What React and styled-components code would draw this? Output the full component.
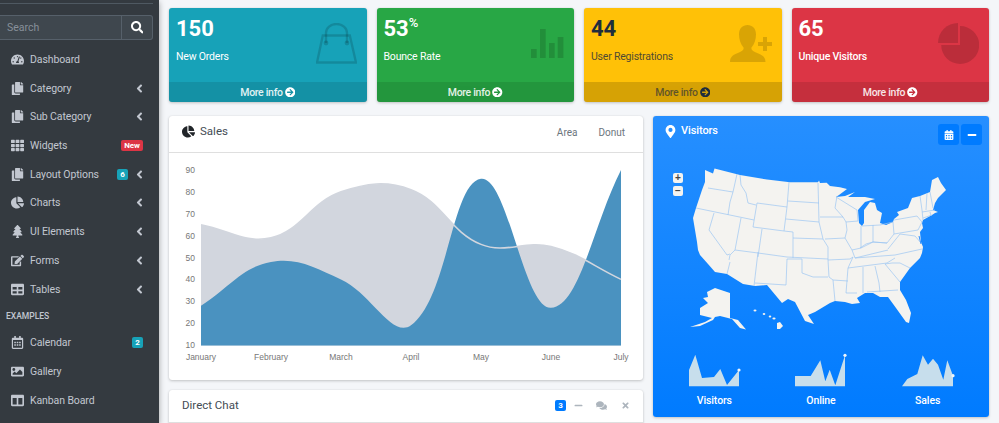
import React from "react";
import styled, { createGlobalStyle } from "styled-components";
import {
  FaTachometerAlt, FaCopy, FaTh, FaChartPie, FaTree, FaEdit, FaTable, FaRegCalendarAlt,
  FaImage, FaColumns, FaSearch, FaAngleLeft, FaArrowCircleRight, FaMapMarkerAlt,
  FaCalendarAlt, FaMinus, FaComments, FaTimes,
} from "react-icons/fa";

const FONT = `Roboto, "Noto Sans", sans-serif`;

const GlobalStyle = createGlobalStyle`
  html, body { margin: 0; height: 423px; overflow: hidden; background: #f4f6f9; }
  body { font-family: ${FONT}; color: #212529; }
  * { box-sizing: border-box; }
`;

const Layout = styled.div`
  display: flex;
  height: 423px;
  overflow: hidden;
`;

const Sidebar = styled.aside`
  width: 159px;
  flex: none;
  background: #343a40;
  box-shadow: 0 2px 6px rgba(0, 0, 0, 0.35);
  padding-top: 3px;
  overflow: hidden;
`;

const Divider = styled.div`
  width: 153px;
  height: 1px;
  background: #4f5962;
`;

const SearchBar = styled.div`
  display: flex;
  width: 153px;
  height: 25px;
  margin: 11px 0 5.2px;
`;

const SearchInput = styled.div`
  flex: 1;
  background: #3f474e;
  border: 1px solid #56606a;
  border-left: 0;
  padding-left: 7px;
  font-size: 10.5px;
  line-height: 23px;
  color: #87909a;
`;

const SearchButton = styled.div`
  width: 31px;
  background: #3f474e;
  border: 1px solid #56606a;
  border-left: 0;
  border-radius: 0 3px 3px 0;
  display: flex;
  align-items: center;
  justify-content: center;
  color: #fff;
  font-size: 12.5px;
`;

const NavItem = styled.div`
  height: 28.7px;
  display: flex;
  align-items: center;
  padding: 0 16px 0 10px;
  color: #c2c7d0;
  font-size: 10.5px;
  letter-spacing: -0.1px;
`;

const NavIcon = styled.span`
  width: 14px;
  margin-right: 6px;
  display: flex;
  justify-content: center;
  font-size: 13px;
`;

const NavLabel = styled.span`
  flex: 1;
  white-space: nowrap;
`;

const NavHeader = styled.div`
  height: 25.2px;
  padding: 6px 0 0 6px;
  color: #c2c7d0;
  font-size: 8.5px;
  line-height: 14px;
  font-weight: 500;
`;

const Badge = styled.span`
  background: ${(p) => p.$color};
  color: #fff;
  border-radius: 2px;
  font-size: 8px;
  font-weight: 700;
  line-height: 11px;
  height: 11px;
  min-width: 11px;
  padding: 0 ${(p) => (p.$wide ? 3 : 2)}px;
  text-align: center;
  letter-spacing: 0;
`;

const Chevron = styled(FaAngleLeft)`
  font-size: 13px;
  margin-left: ${(p) => (p.$near ? 5 : 0)}px;
  margin-right: -3px;
`;

const Main = styled.main`
  flex: 1;
  padding: 8px 10px 0;
  min-width: 0;
`;

const StatRow = styled.div`
  display: grid;
  grid-template-columns: repeat(4, 1fr);
  gap: 10px;
`;

const StatCard = styled.div`
  position: relative;
  height: 94px;
  border-radius: 3px;
  background: ${(p) => p.$bg};
  color: ${(p) => p.$fg};
  box-shadow: 0 0 1px rgba(0, 0, 0, 0.125), 0 1px 3px rgba(0, 0, 0, 0.2);
  display: flex;
  flex-direction: column;
  overflow: hidden;
`;

const StatBody = styled.div`
  flex: 1;
  padding: 6px 7px 0;
`;

const StatValue = styled.div`
  font-size: 22px;
  font-weight: 700;
  line-height: 29px;
  sup { font-size: 13px; font-weight: 500; line-height: 0; position: relative; top: -1px; vertical-align: super; }
`;

const StatLabel = styled.div`
  margin-top: 7px;
  font-size: 10.5px;
  letter-spacing: -0.2px;
  line-height: 14px;
  font-weight: ${(p) => (p.$strong ? 500 : 400)};
  opacity: ${(p) => (p.$dim ? 0.8 : 1)};
`;

const StatIcon = styled.svg`
  position: absolute;
  top: ${(p) => p.$top}px;
  right: ${(p) => p.$right}px;
`;

const StatFooter = styled.div`
  height: 20px;
  background: ${(p) => (p.$dim ? "rgba(0, 0, 0, 0.16)" : "rgba(0, 0, 0, 0.1)")};
  display: flex;
  align-items: center;
  justify-content: center;
  gap: 2px;
  font-size: 10.5px;
  letter-spacing: -0.3px;
  font-weight: 500;
  color: ${(p) => p.$fg};
  span { opacity: ${(p) => (p.$dim ? 0.65 : 0.88)}; }
`;

const Content = styled.div`
  display: grid;
  grid-template-columns: 474px 1fr;
  gap: 10px;
  margin-top: 14px;
  align-items: start;
`;

const Column = styled.div`
  display: flex;
  flex-direction: column;
  gap: 10px;
`;

const Card = styled.section`
  background: #fff;
  border-radius: 3px;
  box-shadow: 0 0 1px rgba(0, 0, 0, 0.125), 0 1px 3px rgba(0, 0, 0, 0.2);
  height: ${(p) => p.$height}px;
  overflow: hidden;
`;

const CardHeader = styled.header`
  height: ${(p) => p.$height}px;
  display: flex;
  align-items: ${(p) => p.$align || "center"};
  padding: ${(p) => p.$pad || "0 14px"};
  border-bottom: 1px solid rgba(0, 0, 0, 0.125);
`;

const Title = styled.h3`
  margin: 0;
  flex: 1;
  display: flex;
  align-items: center;
  gap: 5px;
  font-size: 11.5px;
  line-height: 16px;
  font-weight: 400;
  color: #444c54;
`;

const TabLink = styled.span`
  font-size: 10px;
  color: #6c757d;
  margin-left: 21px;
  margin-top: 3px;
`;

const ToolIcon = styled.span`
  display: flex;
  margin-left: ${(p) => p.$gap}px;
  font-size: ${(p) => p.$size}px;
  color: #adb5bd;
`;

const ChatBadge = styled.span`
  width: 11px;
  height: 11px;
  border-radius: 2px;
  background: #007bff;
  color: #fff;
  font-size: 8px;
  font-weight: 700;
  line-height: 11px;
  text-align: center;
`;

const VisitorsCard = styled.section`
  position: relative;
  height: 301px;
  border-radius: 3px;
  color: #fff;
  background: linear-gradient(180deg, #268fff, #007bff);
  box-shadow: 0 0 1px rgba(0, 0, 0, 0.125), 0 1px 3px rgba(0, 0, 0, 0.2);
`;

const VisitorsHeader = styled.header`
  height: 44px;
  display: flex;
  align-items: flex-start;
  padding: 8px 7px 0 11px;
`;

const VisitorsTitle = styled.h3`
  margin: 0;
  flex: 1;
  display: flex;
  align-items: center;
  gap: 4px;
  font-size: 11px;
  letter-spacing: -0.1px;
  line-height: 14px;
  font-weight: 500;
  svg { font-size: 13px; }
`;

const ToolButton = styled.button`
  width: 21px;
  height: 21px;
  margin-left: 2px;
  padding: 0;
  border: 0;
  border-radius: 3px;
  background: #007bff;
  color: #fff;
  display: flex;
  align-items: center;
  justify-content: center;
  font-size: 10px;
`;

const MapBox = styled.div`
  height: 190px;
  svg { display: block; }
`;

const ZoomControls = styled.div`
  position: absolute;
  left: 20px;
  top: 57px;
  display: flex;
  flex-direction: column;
  gap: 3px;
`;

const ZoomButton = styled.div`
  width: 10px;
  height: 10px;
  border-radius: 2px;
  background: #f4f3f0;
  color: #444;
  font: 700 10px/9px "Liberation Sans", sans-serif;
  text-align: center;
`;

const SparkRow = styled.div`
  display: grid;
  grid-template-columns: repeat(3, 1fr);
  padding: 3px 8px 0;
`;

const SparkCell = styled.div`
  display: flex;
  flex-direction: column;
  align-items: center;
  font-size: 10.5px;
  letter-spacing: -0.1px;
  font-weight: 500;
  line-height: 14px;
  svg { display: block; margin-bottom: 7px; overflow: visible; }
`;

const navItems = [
  { icon: FaTachometerAlt, label: "Dashboard" },
  { icon: FaCopy, label: "Category", arrow: true },
  { icon: FaCopy, label: "Sub Category", arrow: true },
  { icon: FaTh, label: "Widgets", badge: "New", color: "#dc3545" },
  { icon: FaCopy, label: "Layout Options", badge: "6", color: "#17a2b8", arrow: true },
  { icon: FaChartPie, label: "Charts", arrow: true },
  { icon: FaTree, label: "UI Elements", arrow: true },
  { icon: FaEdit, label: "Forms", arrow: true },
  { icon: FaTable, label: "Tables", arrow: true },
];

const exampleItems = [
  { icon: FaRegCalendarAlt, label: "Calendar", badge: "2", color: "#17a2b8" },
  { icon: FaImage, label: "Gallery" },
  { icon: FaColumns, label: "Kanban Board" },
];

const BagIcon = () => (
  <StatIcon $top={15} $right={10} width="41" height="41" viewBox="0 0 41 41" fill="none" stroke="rgba(0,0,0,.15)" strokeWidth="2.4">
    <path d="M6.8 12.5H33.8L40 39.5H1Z" />
    <path d="M10 20V10A10.5 9 0 0 1 31 10V20" />
    <circle cx="10" cy="20" r="2.4" fill="rgba(0,0,0,.15)" stroke="none" />
    <circle cx="31" cy="20" r="2.4" fill="rgba(0,0,0,.15)" stroke="none" />
  </StatIcon>
);

const BarsIcon = () => (
  <StatIcon $top={21} $right={10} width="33" height="29" viewBox="0 0 33 29" fill="rgba(0,0,0,.15)">
    <rect x="0" y="20" width="5.7" height="9" />
    <rect x="9" y="0" width="5.7" height="29" />
    <rect x="18" y="14" width="5.7" height="15" />
    <rect x="26.7" y="8" width="5.7" height="21" />
  </StatIcon>
);

const PersonIcon = () => (
  <StatIcon $top={17} $right={10} width="42" height="37" viewBox="0 0 42 37" fill="rgba(0,0,0,.15)">
    <path d="M0 37C0 31 4 29.5 9 27.5C12.5 26 14 24.5 13.5 22.5C10.5 19 9 14 9 9.5C9 3.5 12.5 0 17.5 0C22.5 0 26 3.5 26 9.5C26 14 24.5 19 21.5 22.5C21 24.5 22.5 26 26 27.5C31 29.5 35.5 31 35.5 37Z" />
    <path d="M33 12H37V17H42V21H37V26H33V21H28V17H33Z" />
  </StatIcon>
);

const PieIcon = () => (
  <StatIcon $top={15} $right={10} width="41" height="41" viewBox="0 0 41 41" fill="rgba(0,0,0,.15)">
    <path d="M22 3A19 19 0 1 1 3.2 22H22Z" />
    <path d="M0 20A20 20 0 0 1 20 0V20Z" />
  </StatIcon>
);

const stats = [
  { value: "150", label: "New Orders", bg: "#17a2b8", fg: "#fff", icon: <BagIcon /> },
  { value: "53", sup: "%", label: "Bounce Rate", bg: "#28a745", fg: "#fff", icon: <BarsIcon /> },
  { value: "44", label: "User Registrations", bg: "#ffc107", fg: "#1f2d3d", dim: true, icon: <PersonIcon /> },
  { value: "65", label: "Unique Visitors", bg: "#dc3545", fg: "#fff", strong: true, icon: <PieIcon /> },
];

// chart.js style spline through the monthly values
const chartX = (i) => 201 + i * 70;
const chartY = (v) => 345 - (v - 10) * 2.1875;

const splinePath = (values, tension = 0.4) => {
  const pts = values.map((v, i) => [chartX(i), chartY(v)]);
  const ctrl = pts.map((p, i) => {
    const a = pts[i - 1] || p;
    const b = pts[i + 1] || p;
    const d1 = Math.hypot(p[0] - a[0], p[1] - a[1]);
    const d2 = Math.hypot(b[0] - p[0], b[1] - p[1]);
    const sum = d1 + d2 || 1;
    const fa = (tension * d1) / sum;
    const fb = (tension * d2) / sum;
    return {
      prev: [p[0] - fa * (b[0] - a[0]), p[1] - fa * (b[1] - a[1])],
      next: [p[0] + fb * (b[0] - a[0]), p[1] + fb * (b[1] - a[1])],
    };
  });
  let d = `M${pts[0][0]} ${pts[0][1]}`;
  for (let i = 1; i < pts.length; i++) {
    const c1 = ctrl[i - 1].next;
    const c2 = ctrl[i].prev;
    d += `C${c1[0]} ${c1[1]} ${c2[0]} ${c2[1]} ${pts[i][0]} ${pts[i][1]}`;
  }
  return d;
};

const grayLine = splinePath([65, 59, 80, 81, 56, 55, 40]);
const blueLine = splinePath([28, 48, 40, 19, 86, 27, 90]);
const closeArea = "L621 345.5L201 345.5Z";
const months = ["January", "February", "March", "April", "May", "June", "July"];
const ticks = [90, 80, 70, 60, 50, 40, 30, 20, 10];

const SalesChart = () => (
  <svg width="474" height="227" viewBox="169 153 474 227" style={{ display: "block" }}>
    <path d={grayLine + closeArea} fill="#d2d6de" />
    <path d={blueLine + closeArea} fill="#4a92c0" />
    <path d={grayLine} fill="none" stroke="#d2d6de" strokeWidth="1.6" />
    <g fontFamily="Liberation Sans, sans-serif" fontSize="8.5" fill="#777">
      {ticks.map((t) => (
        <text key={t} x="195" y={chartY(t) + 3} textAnchor="end">{t}</text>
      ))}
      {months.map((m, i) => (
        <text key={m} x={chartX(i)} y="360" textAnchor="middle">{m}</text>
      ))}
    </g>
  </svg>
);

const USA = "M705 170L713 173.5L714.5 168.5L740 175L767 179.5L790 182.3H818L819 180.5L820 183L826.7 182.7L830 186L840 187.3L847 189L839 195L836 197L845 196L855 192L848 197L865 197L875 199L865 202L858 210L859 223L862 226L864 223L864 210L870 202L875 203L877 210L882 213L880 223L886 225L893 222L894 219L899 215L897 212L908 208L912 198L920 196L930 192L932 180L938 177L941 183L946 190L938 198L935 203L933 210L938 212L935 213L932 215L923 220L922 223L923 228L920 232L921 242L923 247L922 253L920 258L910 268L900 282L900 290L906 300L911 313L909 323L906 322L896 308L888 297L880 297L873 293L865 293L857 298L860 303L852 304L845 302L835 301L830 303L820 309L815 312L808 315L814 324L805 321L795 302L788 299L782 303L767 285L755 286L743 284L727 274L715 272L708 264L700 255L698 250L697 242L693 218L696 208L702 190L705 182Z";

const ALASKA = "M707 292L715 288L730 293V318L738 320L746 329.5L740 328L732 319L720 316L715 317L713 320L700 326L690 327L705 322L712 318L700 315L700 308L708 303L703 298L708 297Z";

const BORDERS = [
  "M708 188L733 192", "M737 174L733 192L730 202L728 215", "M696 208L754 220",
  "M740 175L741 185L746 193L748 203L756 205", "M757 203L787 207L784 231L753 227Z",
  "M789 182L787 207", "M788 201L819 203", "M818 183L819 222", "M786 219L819 222",
  "M784 231L793 232V238L823 239", "M819 222L823 239L828 247L828 260", "M714 213L709 230L727 255L730 254",
  "M741 218L735 250L730 255L729 260", "M762 229L758 257", "M735 250L758 253L787 257L828 259",
  "M793 238L793 258", "M758 252L754 286", "M787 259L786 285", "M730 262L727 274", "M755 283L786 285",
  "M787 259H802V273L813 277L828 277", "M828 260L829 277L833 280L835 301", "M833 280L848 281",
  "M828 260L850 259L853 257", "M853 257L848 268L846 293H857", "M855 258L895 255L922 249",
  "M848 268L887 263L895 258", "M863 267V293", "M875 266L879 283L880 292", "M867 292L898 290",
  "M885 264L900 282", "M885 264L892 263L900 263L910 268", "M837 196L835 208L843 217L846 222",
  "M820 217H843", "M825 239L845 238L847 230L846 222L858 221", "M861 226V248", "M873 225V242",
  "M862 226L880 225L893 222", "M893 222L894 234", "M894 220L917 216L922 222L918 230L894 234",
  "M873 242L887 243L894 234", "M888 249L900 234L915 236L921 243", "M845 238L852 250L855 258",
  "M852 250L861 248L873 242L887 243", "M855 258L888 250", "M920 196L922 210L923 220", "M927 193L926 210",
  "M930 192L933 208", "M922 212L935 210", "M923 218L932 215", "M930 212L931 216",
  "M836 197L857 210L858 221", "M860 248L866 244L873 242",
];

const USMap = () => (
  <svg width="336" height="190" viewBox="653 160 336 190">
    <path d={USA} fill="#f4f3f0" />
    <path d={BORDERS.join("")} fill="none" stroke="#9cc5f2" strokeWidth="0.7" />
    <path d="M919 236L921 244" fill="none" stroke="#2c8eff" strokeWidth="1" />
    <path d={ALASKA} fill="#f4f3f0" />
    <g fill="#f4f3f0">
      <ellipse cx="755" cy="310.5" rx="1.5" ry="1" />
      <ellipse cx="764" cy="314" rx="1.3" ry="1" />
      <ellipse cx="770" cy="316.5" rx="1.3" ry="1" />
      <ellipse cx="774" cy="318.5" rx="1.6" ry="1" />
      <path d="M777 323L780 322L783 326L780 329H777Z" />
    </g>
  </svg>
);

const sparks = [
  { label: "Visitors", pts: "0,17 6.3,1.7 13,25 25,24 31.3,16 38,32 50,17", end: [50, 17] },
  { label: "Online", pts: "0,23 15.7,23 25.3,7.3 30.3,28.3 34.7,16.7 40.3,32.3 50,2.3", end: [50, 2.3] },
  { label: "Sales", pts: "0,33.3 5.3,26 15.3,21 20.7,2.3 26,11.7 31,5.7 36,11.7 41.3,26.7 45.3,7.3 51,22.7", end: [51, 22.7] },
];

const Sparkline = ({ pts, end }) => (
  <svg width="51" height="34" viewBox="0 0 51 34">
    <polygon points={`0,33.3 ${pts} ${end[0]},33.3`} fill="#c7deec" />
    <circle cx={end[0]} cy={end[1]} r="1.6" fill="#eef5fb" />
  </svg>
);

const renderNav = (item) => {
  const Icon = item.icon;
  return (
    <NavItem key={item.label}>
      <NavIcon><Icon /></NavIcon>
      <NavLabel>{item.label}</NavLabel>
      {item.badge && <Badge $color={item.color} $wide={item.badge.length > 1}>{item.badge}</Badge>}
      {item.arrow && <Chevron $near={!!item.badge} />}
    </NavItem>
  );
};

const App = () => (
  <Layout>
    <GlobalStyle />
    <Sidebar>
      <Divider />
      <SearchBar>
        <SearchInput>Search</SearchInput>
        <SearchButton><FaSearch /></SearchButton>
      </SearchBar>
      {navItems.map(renderNav)}
      <NavHeader>EXAMPLES</NavHeader>
      {exampleItems.map(renderNav)}
    </Sidebar>
    <Main>
      <StatRow>
        {stats.map((s) => (
          <StatCard key={s.label} $bg={s.bg} $fg={s.fg}>
            <StatBody>
              <StatValue>{s.value}{s.sup && <sup>{s.sup}</sup>}</StatValue>
              <StatLabel $strong={s.strong} $dim={s.dim}>{s.label}</StatLabel>
            </StatBody>
            {s.icon}
            <StatFooter $fg={s.fg} $dim={s.dim}>
              <span>More info</span>
              <FaArrowCircleRight />
            </StatFooter>
          </StatCard>
        ))}
      </StatRow>
      <Content>
        <Column>
          <Card $height={264}>
            <CardHeader $height={37} $pad="0 18px 6px 13px">
              <Title><FaChartPie color="#212529" size={13} />Sales</Title>
              <TabLink>Area</TabLink>
              <TabLink>Donut</TabLink>
            </CardHeader>
            <SalesChart />
          </Card>
          <Card $height={40}>
            <CardHeader $height={33} $pad="0 13px 2px 13px">
              <Title>Direct Chat</Title>
              <ChatBadge>3</ChatBadge>
              <ToolIcon $gap={8} $size={9}><FaMinus /></ToolIcon>
              <ToolIcon $gap={13} $size={11}><FaComments /></ToolIcon>
              <ToolIcon $gap={14} $size={9}><FaTimes /></ToolIcon>
            </CardHeader>
          </Card>
        </Column>
        <VisitorsCard>
          <VisitorsHeader>
            <VisitorsTitle><FaMapMarkerAlt />Visitors</VisitorsTitle>
            <ToolButton><FaCalendarAlt /></ToolButton>
            <ToolButton><FaMinus /></ToolButton>
          </VisitorsHeader>
          <ZoomControls>
            <ZoomButton>+</ZoomButton>
            <ZoomButton>−</ZoomButton>
          </ZoomControls>
          <MapBox><USMap /></MapBox>
          <SparkRow>
            {sparks.map((s) => (
              <SparkCell key={s.label}>
                <Sparkline pts={s.pts} end={s.end} />
                {s.label}
              </SparkCell>
            ))}
          </SparkRow>
        </VisitorsCard>
      </Content>
    </Main>
  </Layout>
);

export default App;
